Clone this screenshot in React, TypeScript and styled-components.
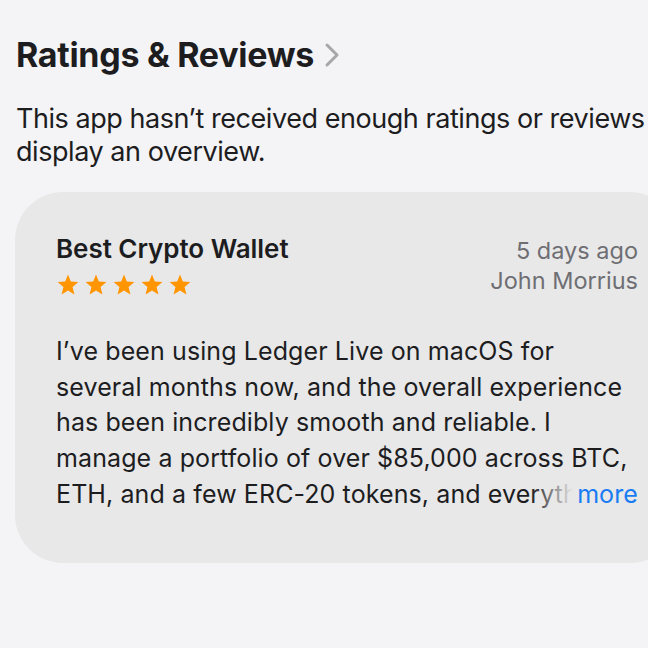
import React from 'react';
import styled, { createGlobalStyle } from 'styled-components';

const GlobalStyle = createGlobalStyle`
  html, body {
    margin: 0;
    padding: 0;
    background: #f4f4f6;
    overflow: hidden;
  }
  body {
    font-family: Inter, "Noto Sans", "Liberation Sans", sans-serif;
    color: #1d1d1f;
  }
`;

const Page = styled.div`
  width: 700px;
  padding: 35px 0 0 16px;
  box-sizing: border-box;
`;

const HeaderRow = styled.div`
  display: flex;
  align-items: center;
  gap: 10px;
`;

const Heading = styled.h2`
  margin: 0;
  font-size: 34px;
  font-weight: 700;
  letter-spacing: -0.3px;
  line-height: 40px;
`;

const Notice = styled.p`
  margin: 27px 0 0;
  font-size: 27px;
  line-height: 33px;
  font-weight: 400;
  letter-spacing: -0.45px;
  width: 680px;
`;

const Card = styled.div`
  margin: 24px 0 0 -1px;
  width: 663px;
  height: 371px;
  box-sizing: border-box;
  background: #e8e8e9;
  border-radius: 48px;
  padding: 39px 40px 0 41px;
`;

const CardTop = styled.div`
  display: flex;
  justify-content: space-between;
  align-items: flex-start;
`;

const TitleBlock = styled.div`
  display: flex;
  flex-direction: column;
  gap: 6px;
`;

const Title = styled.div`
  font-size: 26px;
  font-weight: 600;
  line-height: 36px;
  letter-spacing: -0.05px;
`;

const Stars = styled.div`
  display: flex;
  gap: 4px;
`;

const Meta = styled.div`
  display: flex;
  flex-direction: column;
  align-items: flex-end;
  font-size: 23.5px;
  line-height: 30px;
  color: #6e6e73;
  padding-top: 5px;
`;

const Body = styled.div`
  position: relative;
  margin-top: 37px;
  font-size: 25px;
  line-height: 35.7px;
  height: 179px;
  overflow: hidden;
  letter-spacing: 0.1px;
`;

const More = styled.span`
  position: absolute;
  right: 0;
  bottom: 0;
  line-height: 35.7px;
  color: #1a7cf2;
  padding-left: 46px;
  background: linear-gradient(to right, rgba(232, 232, 233, 0) 0px, #e8e8e9 42px);
`;

const Chevron = () => (
  <svg width="16" height="26" viewBox="0 0 16 26">
    <path d="M3 3 L13 13 L3 23" fill="none" stroke="#a7a7ab" strokeWidth="3" strokeLinecap="round" strokeLinejoin="round" />
  </svg>
);

const Star = () => (
  <svg width="24" height="24" viewBox="0 0 24 24">
    <path
      d="M12 1.5 L14.8 8.6 L22.4 9.1 L16.6 14 L18.4 21.5 L12 17.4 L5.6 21.5 L7.4 14 L1.6 9.1 L9.2 8.6 Z"
      fill="#ff9500"
    />
  </svg>
);

export default function App() {
  return (
    <Page>
      <GlobalStyle />
      <HeaderRow>
        <Heading>Ratings &amp; Reviews</Heading>
        <Chevron />
      </HeaderRow>
      <Notice>
        This app hasn’t received enough ratings or reviews to display an overview.
      </Notice>
      <Card>
        <CardTop>
          <TitleBlock>
            <Title>Best Crypto Wallet</Title>
            <Stars>
              {[0, 1, 2, 3, 4].map((i) => (
                <Star key={i} />
              ))}
            </Stars>
          </TitleBlock>
          <Meta>
            <span>5 days ago</span>
            <span>John Morrius</span>
          </Meta>
        </CardTop>
        <Body>
          I’ve been using Ledger Live on macOS for several months now, and the overall experience has been
          incredibly smooth and reliable. I manage a portfolio of over $85,000 across BTC, ETH, and a few
          ERC-20 tokens, and everything has worked exactly as expected since day one.
          <More>more</More>
        </Body>
      </Card>
    </Page>
  );
}
